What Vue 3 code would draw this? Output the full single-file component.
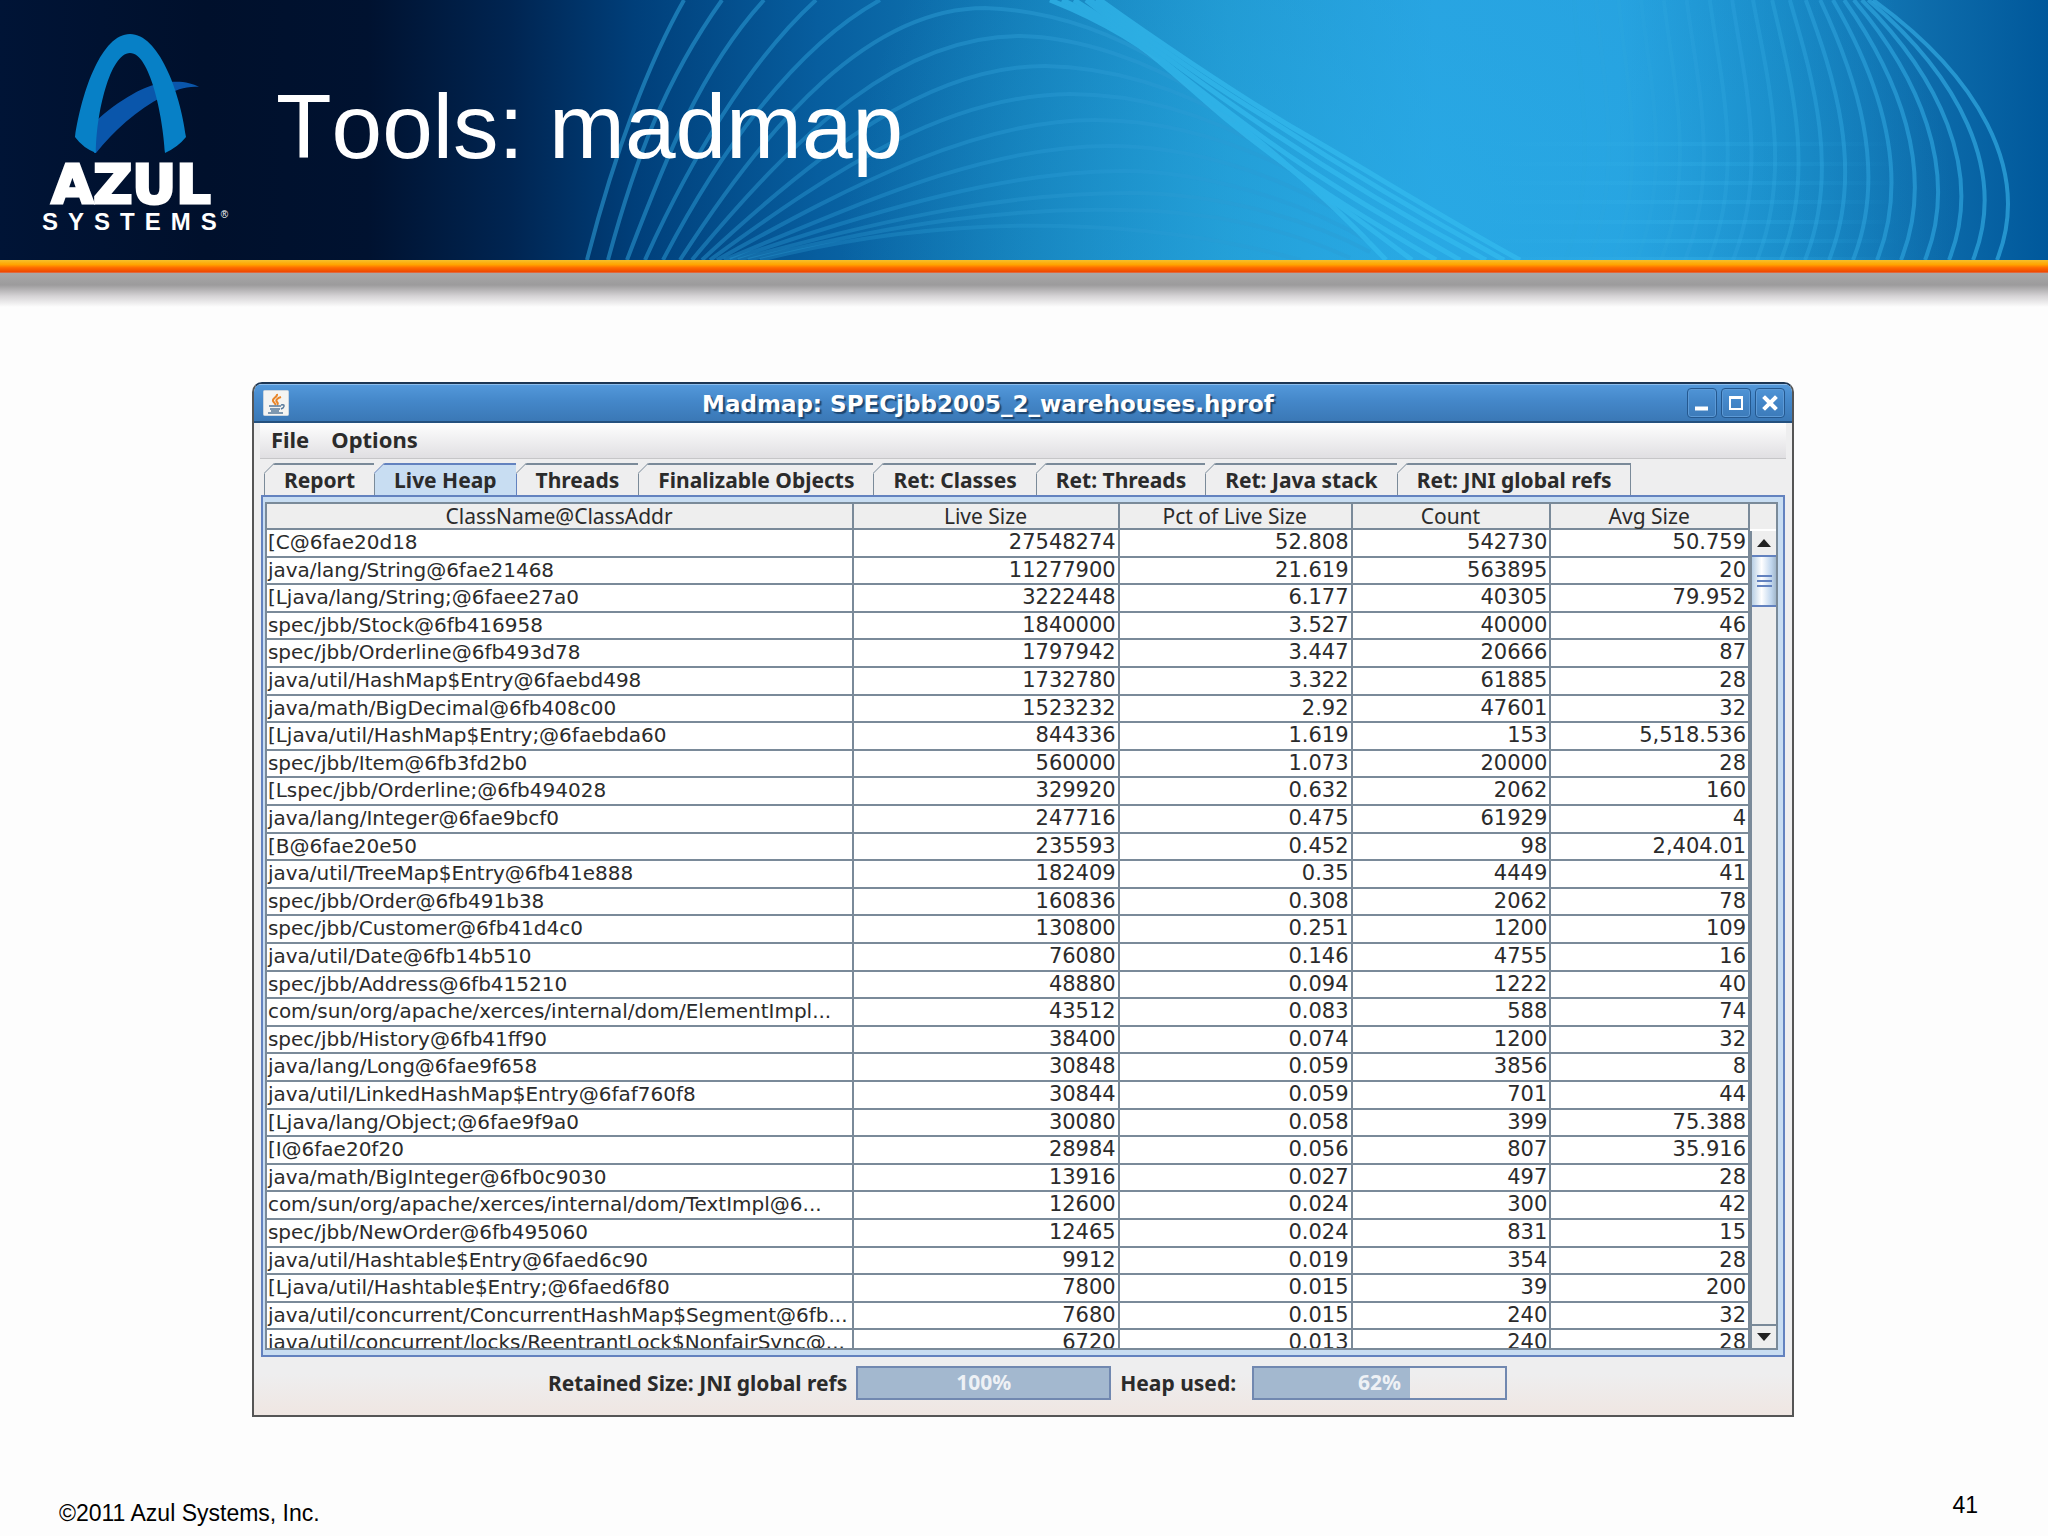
<script setup>
import { ref } from 'vue'

const tabs = [
  'Report', 'Live Heap', 'Threads', 'Finalizable Objects',
  'Ret: Classes', 'Ret: Threads', 'Ret: Java stack', 'Ret: JNI global refs',
]
const activeTab = ref('Live Heap')

const columns = ['ClassName@ClassAddr', 'Live Size', 'Pct of Live Size', 'Count', 'Avg Size']
const rows = [
  ['[C@6fae20d18', '27548274', '52.808', '542730', '50.759'],
  ['java/lang/String@6fae21468', '11277900', '21.619', '563895', '20'],
  ['[Ljava/lang/String;@6faee27a0', '3222448', '6.177', '40305', '79.952'],
  ['spec/jbb/Stock@6fb416958', '1840000', '3.527', '40000', '46'],
  ['spec/jbb/Orderline@6fb493d78', '1797942', '3.447', '20666', '87'],
  ['java/util/HashMap$Entry@6faebd498', '1732780', '3.322', '61885', '28'],
  ['java/math/BigDecimal@6fb408c00', '1523232', '2.92', '47601', '32'],
  ['[Ljava/util/HashMap$Entry;@6faebda60', '844336', '1.619', '153', '5,518.536'],
  ['spec/jbb/Item@6fb3fd2b0', '560000', '1.073', '20000', '28'],
  ['[Lspec/jbb/Orderline;@6fb494028', '329920', '0.632', '2062', '160'],
  ['java/lang/Integer@6fae9bcf0', '247716', '0.475', '61929', '4'],
  ['[B@6fae20e50', '235593', '0.452', '98', '2,404.01'],
  ['java/util/TreeMap$Entry@6fb41e888', '182409', '0.35', '4449', '41'],
  ['spec/jbb/Order@6fb491b38', '160836', '0.308', '2062', '78'],
  ['spec/jbb/Customer@6fb41d4c0', '130800', '0.251', '1200', '109'],
  ['java/util/Date@6fb14b510', '76080', '0.146', '4755', '16'],
  ['spec/jbb/Address@6fb415210', '48880', '0.094', '1222', '40'],
  ['com/sun/org/apache/xerces/internal/dom/ElementImpl...', '43512', '0.083', '588', '74'],
  ['spec/jbb/History@6fb41ff90', '38400', '0.074', '1200', '32'],
  ['java/lang/Long@6fae9f658', '30848', '0.059', '3856', '8'],
  ['java/util/LinkedHashMap$Entry@6faf760f8', '30844', '0.059', '701', '44'],
  ['[Ljava/lang/Object;@6fae9f9a0', '30080', '0.058', '399', '75.388'],
  ['[I@6fae20f20', '28984', '0.056', '807', '35.916'],
  ['java/math/BigInteger@6fb0c9030', '13916', '0.027', '497', '28'],
  ['com/sun/org/apache/xerces/internal/dom/TextImpl@6...', '12600', '0.024', '300', '42'],
  ['spec/jbb/NewOrder@6fb495060', '12465', '0.024', '831', '15'],
  ['java/util/Hashtable$Entry@6faed6c90', '9912', '0.019', '354', '28'],
  ['[Ljava/util/Hashtable$Entry;@6faed6f80', '7800', '0.015', '39', '200'],
  ['java/util/concurrent/ConcurrentHashMap$Segment@6fb...', '7680', '0.015', '240', '32'],
  ['java/util/concurrent/locks/ReentrantLock$NonfairSync@...', '6720', '0.013', '240', '28'],
]

const meters = [
  { id: 'retained', label: 'Retained Size: JNI global refs', value: 100 },
  { id: 'heap', label: 'Heap used:', value: 62 },
]

// Banner line work: a fan on the left, a twisted band, and nested arcs on the right.
const fan = [
  'M587 260 C615 150 650 60 684 0',
  'M608 260 C635 160 665 80 722 0',
  'M627 260 C665 160 700 70 764 0',
  'M645 260 C690 160 750 60 816 0',
  'M663 260 C715 160 790 50 880 0',
  'M680 260 C770 120 870 8 985 8 C1050 10 1110 32 1160 62',
  'M692 260 C800 130 900 36 1020 36 C1080 37 1150 62 1200 94',
  'M702 260 C820 150 930 66 1045 66 C1110 67 1180 88 1235 122',
  'M710 260 C840 165 950 95 1070 94 C1140 94 1210 115 1280 155',
  'M717 260 C860 180 980 120 1095 120 C1170 120 1240 142 1310 180',
  'M724 260 C880 195 990 146 1110 146 C1190 146 1270 172 1340 212',
  'M730 260 C890 205 1010 172 1120 171 C1200 170 1300 200 1370 242',
  'M738 260 C900 215 1010 193 1130 193 C1220 193 1310 220 1370 252',
  'M748 260 C900 222 1010 208 1120 210 C1210 210 1290 230 1350 258',
  'M760 260 C880 230 980 224 1060 226 C1150 228 1230 240 1300 260',
]
const band = [
  'M1050 0 C1110 24 1150 50 1180 78 C1260 140 1320 190 1386 260',
  'M1062 0 C1120 26 1160 55 1200 94 C1280 165 1340 205 1412 260',
  'M1074 0 C1140 40 1180 80 1225 118 C1300 180 1360 215 1436 260',
  'M1086 0 C1140 42 1200 92 1250 128 C1320 180 1390 220 1460 260',
  'M1090 0 C1150 46 1210 90 1260 124 C1340 178 1420 225 1486 260',
  'M1096 0 C1150 42 1220 90 1270 120 C1350 172 1440 225 1504 260',
  'M1100 0 C1150 36 1230 90 1290 126 C1370 172 1450 222 1520 260',
]
const arcs = Array.from({ length: 19 }, (_, k) => {
  const top = 1873 - 4 * k - 0.8 * k * k + (k > 12 ? 0.9 * (k - 12) * (k - 12) : 0)
  const peak = 2011 - 24 * k
  return {
    d: `M${top} 0 C${top + 0.75 * (peak - top)} 75 ${peak + 22} 170 ${peak - 14} 260`,
    opacity: 0.75 - 0.034 * k,
  }
})
const gridLines = [142, 162, 181, 200, 220, 239, 257]
</script>

<template>
  <div class="slide">
    <header class="banner">
      <svg class="banner-art" viewBox="0 0 2048 260" preserveAspectRatio="none" aria-hidden="true">
        <defs>
          <linearGradient id="sky" x1="0" x2="2048" y1="0" y2="0" gradientUnits="userSpaceOnUse">
            <stop offset="0" stop-color="#001436" />
            <stop offset="0.1" stop-color="#00102c" />
            <stop offset="0.18" stop-color="#001230" />
            <stop offset="0.25" stop-color="#002552" />
            <stop offset="0.31" stop-color="#003f7a" />
            <stop offset="0.4" stop-color="#075e9f" />
            <stop offset="0.5" stop-color="#127bb6" />
            <stop offset="0.6" stop-color="#1f94cd" />
            <stop offset="0.7" stop-color="#279fdf" />
            <stop offset="0.79" stop-color="#269fde" />
            <stop offset="0.87" stop-color="#1787c4" />
            <stop offset="0.94" stop-color="#0d6cab" />
            <stop offset="1" stop-color="#00589b" />
          </linearGradient>
          <radialGradient id="glow" cx="1400" cy="260" r="560" gradientUnits="userSpaceOnUse">
            <stop offset="0" stop-color="#2ab0e8" stop-opacity="0.6" />
            <stop offset="1" stop-color="#2ab0e8" stop-opacity="0" />
          </radialGradient>
          <linearGradient id="grid" x1="1480" x2="1900" y1="0" y2="0" gradientUnits="userSpaceOnUse">
            <stop offset="0" stop-color="#35b4ea" stop-opacity="0" />
            <stop offset="0.5" stop-color="#35b4ea" stop-opacity="0.6" />
            <stop offset="1" stop-color="#35b4ea" stop-opacity="0" />
          </linearGradient>
        </defs>
        <rect width="2048" height="260" fill="url(#sky)" />
        <rect width="2048" height="260" fill="url(#glow)" />
        <g fill="none" stroke="#2b9bd4" stroke-width="4">
          <path v-for="(d, i) in fan" :key="i" :d="d" :opacity="0.6 - i * 0.02" />
        </g>
        <g fill="none" stroke="#35bdf0" stroke-width="5" opacity="0.65">
          <path v-for="(d, i) in band" :key="i" :d="d" />
        </g>
        <g fill="none" stroke="#2fa6de" stroke-width="4">
          <path v-for="(arc, i) in arcs" :key="i" :d="arc.d" :opacity="arc.opacity" />
        </g>
        <g fill="url(#grid)">
          <rect v-for="y in gridLines" :key="y" x="1480" :y="y" width="420" height="4" :opacity="y / 400" />
        </g>
      </svg>

      <div class="brand">
        <svg class="brand-mark" viewBox="0 0 126 120" aria-hidden="true">
          <path d="M22 87 C44 67 72 49 95 48 C109 47 118 49 125 53 C112 52 102 56 90 62 C62 76 40 97 22 119 L20 119 Z" fill="#0a56ab" />
          <path d="M1 103 C8 56 28 0 56 0 C84 0 106 56 112 103 Q104 113 91 119 C89 82 76 19 56 19 C36 19 22 80 22 119 Q9 114 1 103 Z" fill="#0780c6" />
        </svg>
        <span class="brand-name">AZUL</span>
        <span class="brand-sub">SYSTEMS<sup>®</sup></span>
      </div>
      <h1>Tools: madmap</h1>
    </header>
    <div class="rule"></div>
    <div class="rule-shadow"></div>

    <main>
      <section class="window">
        <div class="titlebar">
          <svg class="java-icon" viewBox="0 0 26 26" aria-hidden="true">
            <rect x="0.500" y="0.500" width="25" height="25" rx="1" fill="#f4f4f2" stroke="#c9d4de" />
            <path d="M14 4 C15 7 9 8 10 11 C11 13 13 13 12 15 M18 7 C15 8 12 10 14 12 C15 13 15 14 14 15" fill="none" stroke="#e8862a" stroke-width="2" />
            <path d="M6 16 H18 M7 19 H17 M18 15 Q23 14 20 18 L18 19 M5 23 H20 M8 21 H16" fill="none" stroke="#57799a" stroke-width="1.500" />
          </svg>
          <h2>Madmap: SPECjbb2005_2_warehouses.hprof</h2>
          <div class="controls">
            <button type="button" aria-label="Minimize">
              <svg viewBox="0 0 28 28"><path d="M7 19.500 H20" stroke="#fff" stroke-width="4" /></svg>
            </button>
            <button type="button" aria-label="Maximize">
              <svg viewBox="0 0 28 28"><path d="M8 8 H20 V20 H8 Z M8 9 H20" fill="none" stroke="#fff" stroke-width="2" /></svg>
            </button>
            <button type="button" aria-label="Close">
              <svg viewBox="0 0 28 28"><path d="M9 9 L19 19 M19 9 L9 19" stroke="#fff" stroke-width="4" stroke-linecap="square" /></svg>
            </button>
          </div>
        </div>

        <nav class="menubar">
          <button type="button">File</button>
          <button type="button">Options</button>
        </nav>

        <div class="tabs" role="tablist">
          <button
            v-for="tab in tabs"
            :key="tab"
            type="button"
            role="tab"
            class="tab"
            :class="{ active: tab === activeTab }"
            :aria-selected="tab === activeTab"
            @click="activeTab = tab"
          >
            <svg class="tab-corner" viewBox="0 0 11 11" aria-hidden="true">
              <path class="cut" d="M0 0 H11 L0 11 Z" />
              <path class="slope" d="M0 10.500 L10.500 0" />
            </svg>
            {{ tab }}
          </button>
        </div>

        <div class="pane">
          <div class="grid">
            <div class="viewport">
              <table>
                <colgroup>
                  <col class="col-name" /><col class="col-size" /><col class="col-pct" /><col class="col-count" /><col />
                </colgroup>
                <thead>
                  <tr><th v-for="c in columns" :key="c" scope="col">{{ c }}</th></tr>
                </thead>
                <tbody>
                  <tr v-for="row in rows" :key="row[0]">
                    <td v-for="(cell, i) in row" :key="i">{{ cell }}</td>
                  </tr>
                </tbody>
              </table>
            </div>
            <div class="scrollbar">
              <div class="scroll-head"></div>
              <button type="button" class="arrow" aria-label="Scroll up">
                <svg viewBox="0 0 14 8"><path d="M0 8 L7 0 L14 8 Z" /></svg>
              </button>
              <div class="track">
                <div class="thumb"><i></i><i></i><i></i></div>
              </div>
              <button type="button" class="arrow down" aria-label="Scroll down">
                <svg viewBox="0 0 14 8"><path d="M0 0 L7 8 L14 0 Z" /></svg>
              </button>
            </div>
          </div>
        </div>

        <div class="status">
          <template v-for="m in meters" :key="m.id">
            <span :id="m.id" class="meter-label">{{ m.label }}</span>
            <div class="meter" role="progressbar" :aria-labelledby="m.id" :aria-valuenow="m.value">
              <div class="meter-fill" :style="{ width: m.value + '%' }"></div>
              <span class="meter-text">{{ m.value }}%</span>
            </div>
          </template>
        </div>
      </section>
    </main>

    <footer>
      <span>©2011 Azul Systems, Inc.</span>
      <span class="page-number">41</span>
    </footer>
  </div>
</template>

<style>
body {
  margin: 0;
  background: #fdfdfd;
}
</style>

<style scoped>
.slide {
  display: flex;
  flex-direction: column;
  min-height: 100vh;
  font-family: "Liberation Sans", Arial, sans-serif;
  color: #111;
}

.slide *,
.slide {
  box-sizing: border-box;
}

button {
  margin: 0;
  padding: 0;
  border: 0;
  background: none;
  color: inherit;
  font: inherit;
}

/* Banner */
.banner {
  position: relative;
  display: flex;
  height: 260px;
  padding-left: 40px;
  color: #fff;
}

.banner-art {
  position: absolute;
  inset: 0;
  width: 100%;
  height: 100%;
}

.brand {
  position: relative;
  display: flex;
  flex-direction: column;
  width: 192px;
  padding-top: 34px;
}

.brand-mark {
  width: 126px;
  height: 120px;
  margin-left: 34px;
}

.brand-name {
  width: 182px;
  margin-top: 6px;
  text-align: center;
  font: bold 54px/50px "DejaVu Sans", sans-serif;
  -webkit-text-stroke: 3px #fff;
}

.brand-sub {
  display: flex;
  padding-left: 2px;
  font-size: 24px;
  line-height: 24px;
  font-weight: bold;
  letter-spacing: 10px;
}

.brand-sub sup {
  margin-left: -6px;
  font-size: 10px;
  line-height: 10px;
  font-weight: normal;
  letter-spacing: normal;
}

h1 {
  position: relative;
  margin: 0;
  padding: 74px 0 0 44px;
  font-size: 91px;
  line-height: 106px;
  font-weight: normal;
  font-kerning: none;
}

.rule {
  height: 13px;
  background: linear-gradient(#f6c02c, #ffa400 35%, #ff6a00 60%, #ee4a00 90%, #d97a60);
}

.rule-shadow {
  height: 34px;
  background: linear-gradient(#a8a8a8, #9c9b9c 35%, #d5d3d5 68%, #fdfdfd);
}

/* Application window */
main {
  padding: 75px 12.4% 0 12.3%;
}

.window {
  border: 2px solid #555;
  border-top-color: #1c3654;
  border-radius: 10px 10px 0 0;
  background: linear-gradient(#eeeeef 96%, #efe6e2);
  overflow: hidden;
  color: #2b2b2b;
  font-family: "Noto Sans", sans-serif;
}

.titlebar {
  display: flex;
  align-items: center;
  height: 39px;
  padding: 0 7px 0 9px;
  border-top: 1px solid #8cbdec;
  border-bottom: 2px solid #24507e;
  background: linear-gradient(#5398da, #4487c9 45%, #3a78b6);
}

.java-icon {
  width: 26px;
  height: 26px;
}

h2 {
  flex: 1;
  margin: 0;
  padding-top: 2px;
  text-align: center;
  color: #fff;
  font: bold 23px/32px "DejaVu Sans", sans-serif;
  text-shadow: 2px 2px 1px #1d4670;
}

.controls {
  display: flex;
  gap: 4px;
}

.controls button {
  width: 30px;
  height: 30px;
  border: 1px solid #24588f;
  border-radius: 4px;
  box-shadow: inset 0 0 0 1px #5d9ad6;
}

.controls svg {
  display: block;
  width: 28px;
  height: 28px;
}

.menubar {
  display: flex;
  gap: 22px;
  height: 36px;
  margin: 0 6px;
  padding-left: 11px;
  border-bottom: 1px solid #c6c6c8;
  background: linear-gradient(#fefefe, #e0dfe2);
  font-size: 22px;
  line-height: 32px;
  font-weight: bold;
}

.menubar button {
  height: 32px;
}

.tabs {
  display: flex;
  margin: 4px 6px 0;
  padding-left: 4px;
}

.tab {
  position: relative;
  height: 32px;
  padding: 0 19px;
  border: solid #7a8a99;
  border-width: 2px 1px 0 0;
  font-size: 21px;
  line-height: 28px;
  font-weight: bold;
  white-space: nowrap;
}

.tab:first-child {
  border-left-width: 1px;
}

.tab-corner {
  position: absolute;
  top: -2px;
  left: -1px;
  width: 11px;
  height: 11px;
}

.cut {
  fill: #eeeeef;
}

.slope {
  fill: none;
  stroke: #7a8a99;
}

.active {
  border-color: #6382bf;
  background: #c8ddf2;
}

.active .slope {
  stroke: #6382bf;
}

.pane {
  margin: 0 7px;
  padding: 5px 5px 5px 2px;
  border: 2px solid #6382bf;
  background: #c8ddf2;
}

.grid {
  display: flex;
  height: 848px;
  border: 2px solid #7a8a99;
  background: #eee;
}

.viewport {
  flex: 1;
  overflow: hidden;
  background: #fff;
}

table {
  width: 100%;
  table-layout: fixed;
  border-collapse: separate;
  border-spacing: 0;
}

.col-name { width: 39.6%; }
.col-size { width: 17.9%; }
.col-pct { width: 15.7%; }
.col-count { width: 13.4%; }

th,
td {
  height: 28px;
  padding: 0 2px 0 1px;
  border: solid #7a8a99;
  border-width: 0 2px 2px 0;
  line-height: 24px;
  vertical-align: top;
  white-space: nowrap;
}

th {
  height: 26px;
  background: #eee;
  font-size: 21px;
  font-weight: normal;
}

tbody tr:nth-child(5n + 2) td,
tbody tr:nth-child(5n + 4) td {
  height: 27px;
}

td {
  font-family: "DejaVu Sans", sans-serif;
  font-size: 21px;
  text-align: right;
}

td:first-child {
  font-size: 20px;
  text-align: left;
}

.scrollbar {
  display: flex;
  flex-direction: column;
  width: 26px;
}

.scroll-head {
  height: 27px;
  border-bottom: 2px solid #fff;
}

.arrow {
  display: flex;
  align-items: center;
  justify-content: center;
  height: 24px;
  border-left: 2px solid #7a8a99;
}

.arrow svg {
  width: 14px;
  height: 8px;
  fill: #222;
}

.arrow.down {
  border-top: 2px solid #7a8a99;
}

.track {
  flex: 1;
  border-left: 2px solid #7a8a99;
}

.thumb {
  display: flex;
  flex-direction: column;
  align-items: center;
  justify-content: center;
  gap: 3px;
  height: 52px;
  border: 2px solid #6382bf;
  border-width: 2px 0;
  background: linear-gradient(90deg, #b8cfe5, #fff 40%, #c0d6ee 80%, #a3b8cc);
}

.thumb i {
  width: 15px;
  height: 2px;
  background: #6382bf;
}

.status {
  display: flex;
  align-items: center;
  justify-content: center;
  height: 58px;
  padding-bottom: 6px;
  font-size: 21px;
  line-height: 28px;
  font-weight: bold;
}

.meter-label {
  margin: 0 9px;
}

.meter-label ~ .meter-label {
  margin-right: 16px;
}

.meter {
  position: relative;
  width: 255px;
  height: 34px;
  border: 2px solid #7188b0;
}

.meter-fill {
  height: 100%;
  background: #a3b8cf;
}

.meter-text {
  position: absolute;
  inset: 0;
  text-align: center;
  color: #eef1f5;
}

/* Slide footer */
footer {
  display: flex;
  justify-content: space-between;
  margin-top: auto;
  padding: 0 70px 10px 59px;
  font-size: 23px;
  line-height: 26px;
  color: #000;
}

.page-number {
  padding-bottom: 8px;
}

footer span:first-child {
  align-self: flex-end;
}
</style>
